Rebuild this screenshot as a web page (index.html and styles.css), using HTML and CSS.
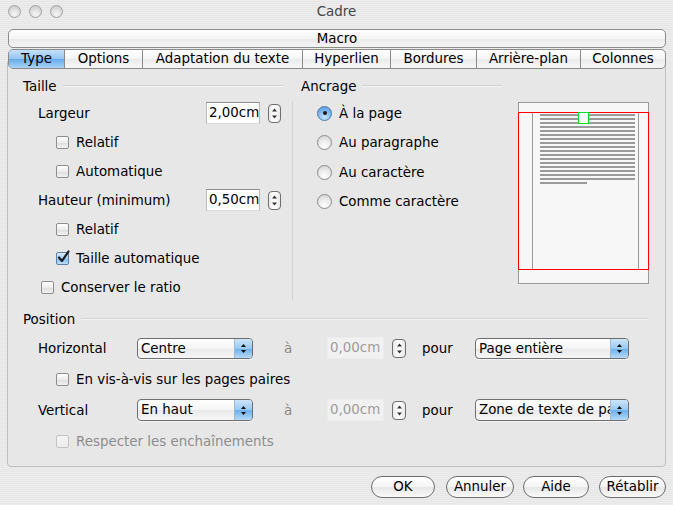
FILE: index.html
```html
<!DOCTYPE html>
<html lang="fr">
<head>
<meta charset="utf-8">
<title>Cadre</title>
<link rel="stylesheet" href="styles.css">
</head>
<body>
<div class="window">
  <div class="titlebar">
    <div class="lights"><span class="light"></span><span class="light"></span><span class="light"></span></div>
    <div class="title">Cadre</div>
    <div class="spacer"></div>
  </div>

  <div class="macro">Macro</div>

  <div class="tabs">
    <div class="tab sel t1">Type</div>
    <div class="tab t2">Options</div>
    <div class="tab t3">Adaptation du texte</div>
    <div class="tab t4">Hyperlien</div>
    <div class="tab t5">Bordures</div>
    <div class="tab t6">Arrière-plan</div>
    <div class="tab t7">Colonnes</div>
  </div>

  <div class="panel">
    <div class="top">
      <div class="taille">
        <div class="sec-head"><span>Taille</span><span class="rule"></span></div>
        <div class="row field">
          <span class="lbl">Largeur</span>
          <span class="input">2,00cm</span>
          <span class="spin"><svg width="7" height="13" viewBox="0 0 7 13"><path d="M1 4.5 L3.5 1.5 L6 4.5Z" fill="#333"/><path d="M1 8.5 L3.5 11.5 L6 8.5Z" fill="#333"/></svg></span>
        </div>
        <div class="row chk"><span class="cb"></span><span class="cl">Relatif</span></div>
        <div class="row chk"><span class="cb"></span><span class="cl">Automatique</span></div>
        <div class="row field">
          <span class="lbl">Hauteur (minimum)</span>
          <span class="input">0,50cm</span>
          <span class="spin"><svg width="7" height="13" viewBox="0 0 7 13"><path d="M1 4.5 L3.5 1.5 L6 4.5Z" fill="#333"/><path d="M1 8.5 L3.5 11.5 L6 8.5Z" fill="#333"/></svg></span>
        </div>
        <div class="row chk"><span class="cb"></span><span class="cl">Relatif</span></div>
        <div class="row chk"><span class="cb on"><svg width="15" height="15" viewBox="0 0 15 15"><path d="M3 7.5 L6 11 L12.5 1.5" fill="none" stroke="#1b1b1b" stroke-width="2.2" stroke-linecap="round" stroke-linejoin="round"/></svg></span><span class="cl">Taille automatique</span></div>
        <div class="row chk outer"><span class="cb"></span><span class="cl">Conserver le ratio</span></div>
      </div>

      <div class="ancrage">
        <div class="anc-main">
          <div class="sec-head anc-head"><span>Ancrage</span><span class="rule"></span></div>
          <div class="radios">
            <div class="rrow"><span class="rb on"></span><span class="cl">À la page</span></div>
            <div class="rrow"><span class="rb"></span><span class="cl">Au paragraphe</span></div>
            <div class="rrow"><span class="rb"></span><span class="cl">Au caractère</span></div>
            <div class="rrow"><span class="rb"></span><span class="cl">Comme caractère</span></div>
          </div>
        </div>
        <div class="preview">
          <svg width="131" height="182" viewBox="0 0 131 182">
            <rect x="0.5" y="0.5" width="130" height="181" fill="#f7f7f7" stroke="#9a9a9a"/>
            <line x1="14.5" y1="10" x2="14.5" y2="167" stroke="#9a9a9a"/>
            <line x1="120.5" y1="10" x2="120.5" y2="167" stroke="#9a9a9a"/>
            <g fill="#9a9a9a">
              <rect x="22" y="12" width="95" height="2"/>
              <rect x="22" y="16" width="95" height="2"/>
              <rect x="22" y="20" width="95" height="2"/>
              <rect x="22" y="24" width="95" height="2"/>
              <rect x="22" y="28" width="95" height="2"/>
              <rect x="22" y="32" width="95" height="2"/>
              <rect x="22" y="36" width="95" height="2"/>
              <rect x="22" y="40" width="95" height="2"/>
              <rect x="22" y="44" width="95" height="2"/>
              <rect x="22" y="48" width="95" height="2"/>
              <rect x="22" y="52" width="95" height="2"/>
              <rect x="22" y="56" width="95" height="2"/>
              <rect x="22" y="60" width="95" height="2"/>
              <rect x="22" y="64" width="95" height="2"/>
              <rect x="22" y="68" width="95" height="2"/>
              <rect x="22" y="72" width="95" height="2"/>
              <rect x="22" y="76" width="95" height="2"/>
              <rect x="22" y="80" width="47" height="2"/>
            </g>
            <rect x="0.5" y="10.5" width="130" height="157" fill="none" stroke="#ff0000"/>
            <rect x="60.5" y="10.5" width="10" height="11" fill="#ffffff" stroke="#00e020"/>
          </svg>
        </div>
      </div>
    </div>

    <div class="position">
      <div class="sec-head"><span>Position</span><span class="rule"></span></div>
      <div class="prow">
        <span class="plbl">Horizontal</span>
        <span class="select s1"><span class="stext">Centre</span><span class="sarrow"><svg width="7" height="11" viewBox="0 0 7 11"><path d="M1 4 L3.5 1 L6 4Z" fill="#111"/><path d="M1 7 L3.5 10 L6 7Z" fill="#111"/></svg></span></span>
        <span class="a">à</span>
        <span class="input dis">0,00cm</span>
        <span class="spin pspin"><svg width="7" height="13" viewBox="0 0 7 13"><path d="M1 4.5 L3.5 1.5 L6 4.5Z" fill="#333"/><path d="M1 8.5 L3.5 11.5 L6 8.5Z" fill="#333"/></svg></span>
        <span class="pour">pour</span>
        <span class="select s2"><span class="stext">Page entière</span><span class="sarrow"><svg width="7" height="11" viewBox="0 0 7 11"><path d="M1 4 L3.5 1 L6 4Z" fill="#111"/><path d="M1 7 L3.5 10 L6 7Z" fill="#111"/></svg></span></span>
      </div>
      <div class="prow pchk"><span class="cb"></span><span class="cl">En vis-à-vis sur les pages paires</span></div>
      <div class="prow">
        <span class="plbl">Vertical</span>
        <span class="select s1 tall"><span class="stext">En haut</span><span class="sarrow"><svg width="7" height="11" viewBox="0 0 7 11"><path d="M1 4 L3.5 1 L6 4Z" fill="#111"/><path d="M1 7 L3.5 10 L6 7Z" fill="#111"/></svg></span></span>
        <span class="a">à</span>
        <span class="input dis">0,00cm</span>
        <span class="spin pspin"><svg width="7" height="13" viewBox="0 0 7 13"><path d="M1 4.5 L3.5 1.5 L6 4.5Z" fill="#333"/><path d="M1 8.5 L3.5 11.5 L6 8.5Z" fill="#333"/></svg></span>
        <span class="pour">pour</span>
        <span class="select s2 tall"><span class="stext">Zone de texte de page</span><span class="sarrow"><svg width="7" height="11" viewBox="0 0 7 11"><path d="M1 4 L3.5 1 L6 4Z" fill="#111"/><path d="M1 7 L3.5 10 L6 7Z" fill="#111"/></svg></span></span>
      </div>
      <div class="prow pchk"><span class="cb dis"></span><span class="cl disl">Respecter les enchaînements</span></div>
    </div>
  </div>

  <div class="buttons">
    <span class="btn b-ok">OK</span>
    <span class="btn b-an">Annuler</span>
    <span class="btn b-ai">Aide</span>
    <span class="btn b-re">Rétablir</span>
  </div>
</div>
</body>
</html>
```

FILE: styles.css
```css
* { box-sizing: border-box; }

html, body {
  margin: 0;
  padding: 0;
}

body {
  width: 673px;
  height: 505px;
  overflow: hidden;
  font-family: "DejaVu Sans", "Liberation Sans", sans-serif;
  font-size: 13.4px;
  color: #000;
  background-color: #ebebeb;
  background-image: repeating-linear-gradient(0deg, #ececec 0px, #ececec 1px, #e7e7e7 1px, #e7e7e7 2px);
}

.window {
  width: 673px;
  height: 505px;
}

/* title bar */
.titlebar {
  height: 22px;
  display: grid;
  grid-template-columns: 80px 1fr 80px;
  align-items: center;
}

.lights {
  display: flex;
  gap: 8px;
  padding-left: 8px;
}

.light {
  width: 13px;
  height: 13px;
  border-radius: 50%;
  border: 1px solid #a2a2a2;
  background: radial-gradient(circle at 50% 75%, #f7f7f7 0%, #dcdcdc 55%, #c4c4c4 100%);
}

.title {
  text-align: center;
  color: #454545;
  padding-top: 1px;
}

/* macro bar */
.macro {
  margin: 7px 7px 0 8px;
  height: 19px;
  border: 1px solid #8c8c8c;
  border-radius: 5px;
  background: linear-gradient(#ffffff, #f4f4f4 50%, #ebebeb 51%, #f4f4f4);
  text-align: center;
  line-height: 17px;
}

/* tabs */
.tabs {
  position: relative;
  z-index: 1;
  margin: 1px 7px 0 8px;
  height: 20px;
  display: flex;
  border: 1px solid #8a8a8a;
  border-radius: 5px;
  overflow: hidden;
  background: linear-gradient(#ffffff, #f5f5f5 50%, #ebebeb 51%, #f7f7f7);
}

.tab {
  height: 18px;
  line-height: 18px;
  text-align: center;
  border-left: 1px solid #8a8a8a;
}

.tab.t1 { border-left: none; width: 55px; }
.tab.t2 { width: 78px; }
.tab.t3 { width: 160px; }
.tab.t4 { width: 88px; }
.tab.t5 { width: 86px; }
.tab.t6 { width: 104px; }
.tab.t7 { flex: 1; }

.tab.sel {
  background: linear-gradient(#c6e0f8, #93c5f2 50%, #67aaea 51%, #a9d4f7);
}

/* panel */
.panel {
  margin: -10px 7px 0 7px;
  height: 408px;
  border: 1px solid #c0c0c0;
  border-radius: 4px;
  background: #e7e7e7;
  padding-top: 16px;
}

.top {
  display: flex;
  height: 224px;
}

.sec-head {
  display: flex;
  align-items: center;
  height: 20px;
  gap: 6px;
}

.rule {
  flex: 1;
  height: 2px;
  border-top: 1px solid #d2d2d2;
  border-bottom: 1px solid #f3f3f3;
}

.taille {
  width: 284px;
  padding-left: 15px;
  padding-right: 9px;
}

.row {
  display: flex;
  align-items: center;
  height: 24px;
  margin-top: 5px;
}

.row.field { padding-left: 15px; }
.row.chk { padding-left: 33px; }
.row.chk.outer { padding-left: 18px; }

.lbl { flex: 1; }

.input {
  width: 54px;
  height: 22px;
  background: #fff;
  border-top: 1px solid #8d8d8d;
  border-left: 1px solid #b9b9b9;
  border-right: 1px solid #b9b9b9;
  border-bottom: 1px solid #dadada;
  padding-left: 2px;
  line-height: 20px;
  white-space: nowrap;
  overflow: hidden;
}

.input.dis {
  width: 57px;
  background: #f1f1f1;
  border-color: #ececec;
  color: #9c9c9c;
}

.spin {
  width: 13px;
  height: 19px;
  margin-left: 8px;
  margin-right: 2px;
  border: 1px solid #6f6f6f;
  border-radius: 4px;
  background: linear-gradient(90deg, #e9e9e9, #ffffff 50%, #e9e9e9);
  display: flex;
  align-items: center;
  justify-content: center;
}

.spin.pspin {
  width: 14px;
  margin-right: 0;
}

.cb {
  width: 13px;
  height: 13px;
  border: 1px solid #8e8e8e;
  border-radius: 2px;
  background: linear-gradient(#ffffff, #ececec 50%, #dedede 51%, #f2f2f2);
  position: relative;
  flex: none;
}

.cb.on {
  background: linear-gradient(#d9ebfb, #a5cff4 50%, #7fb8ec 51%, #c1e0f9);
  border-color: #5b7fa6;
}

.cb.on svg {
  position: absolute;
  left: -1px;
  top: -3px;
}

.cb.dis {
  border-color: #c4c4c4;
  background: linear-gradient(#f4f4f4, #ececec);
}

.cl {
  margin-left: 7px;
  white-space: nowrap;
}

.disl { color: #8d8d8d; }

/* ancrage */
.ancrage {
  flex: 1;
  display: flex;
}

.anc-main {
  width: 213px;
}

.anc-head {
  padding-left: 9px;
  padding-right: 3px;
}

.radios {
  margin-top: 5px;
  height: 199px;
  border-left: 1px solid #d2d2d2;
  padding-left: 24px;
  display: flex;
  flex-direction: column;
  gap: 5.6px;
}

.rrow {
  display: flex;
  align-items: center;
  height: 24px;
}

.rb {
  width: 15px;
  height: 15px;
  border-radius: 50%;
  border: 1px solid #8c8c8c;
  background: radial-gradient(circle at 50% 80%, #ffffff 0%, #ededed 45%, #cfcfcf 100%);
  position: relative;
  flex: none;
}

.rb.on {
  border-color: #4f79a8;
  background: radial-gradient(circle at 50% 80%, #c9e4fb 0%, #82bbee 50%, #4d94dc 100%);
}

.rb.on::after {
  content: "";
  position: absolute;
  left: 4.5px;
  top: 4.5px;
  width: 4px;
  height: 4px;
  border-radius: 50%;
  background: #1a1a1a;
}

.preview {
  margin-left: 13px;
  margin-top: 26px;
  width: 131px;
  height: 182px;
}

.preview svg { display: block; }

/* position */
.position {
  margin-top: 9px;
  padding-left: 15px;
  padding-right: 17px;
}

.prow {
  display: flex;
  align-items: center;
  height: 24px;
  margin-top: 7px;
  padding-left: 15px;
}

.prow.pchk { padding-left: 33px; }

.plbl { width: 99px; }

.select {
  display: flex;
  height: 21px;
  border: 1px solid #6e6e6e;
  border-radius: 4px;
  overflow: hidden;
  background: linear-gradient(#ffffff, #f5f5f5 50%, #e9e9e9 51%, #f6f6f6);
  box-shadow: 0 1px 0 rgba(255,255,255,0.6);
}

.select.tall { height: 22px; }

.select.s1 { width: 116px; }
.select.s2 { width: 154px; }

.stext {
  flex: 1;
  padding-left: 3px;
  line-height: 19px;
  white-space: nowrap;
  overflow: hidden;
}

.sarrow {
  width: 18px;
  flex: none;
  display: flex;
  align-items: center;
  justify-content: center;
  border-left: 1px solid #9fb8d4;
  background: linear-gradient(#cde5fa, #98c9f2 50%, #6cafe9 51%, #b5daf8);
}

.a {
  width: 74px;
  padding-left: 31px;
  color: #8a8a8a;
}

.pour {
  width: 53px;
  margin-left: 16px;
}

/* buttons */
.buttons {
  display: flex;
  justify-content: flex-end;
  margin-top: 9px;
  padding-right: 7px;
}

.btn {
  height: 22px;
  border: 1px solid #6d6d6d;
  border-radius: 11px;
  background: linear-gradient(#ffffff, #f4f4f4 50%, #e6e6e6 51%, #fafafa);
  text-align: center;
  line-height: 20px;
}

.b-ok { width: 64px; margin-right: 11px; }
.b-an { width: 68px; margin-right: 9px; }
.b-ai { width: 66px; margin-right: 10px; }
.b-re { width: 67px; }
```
